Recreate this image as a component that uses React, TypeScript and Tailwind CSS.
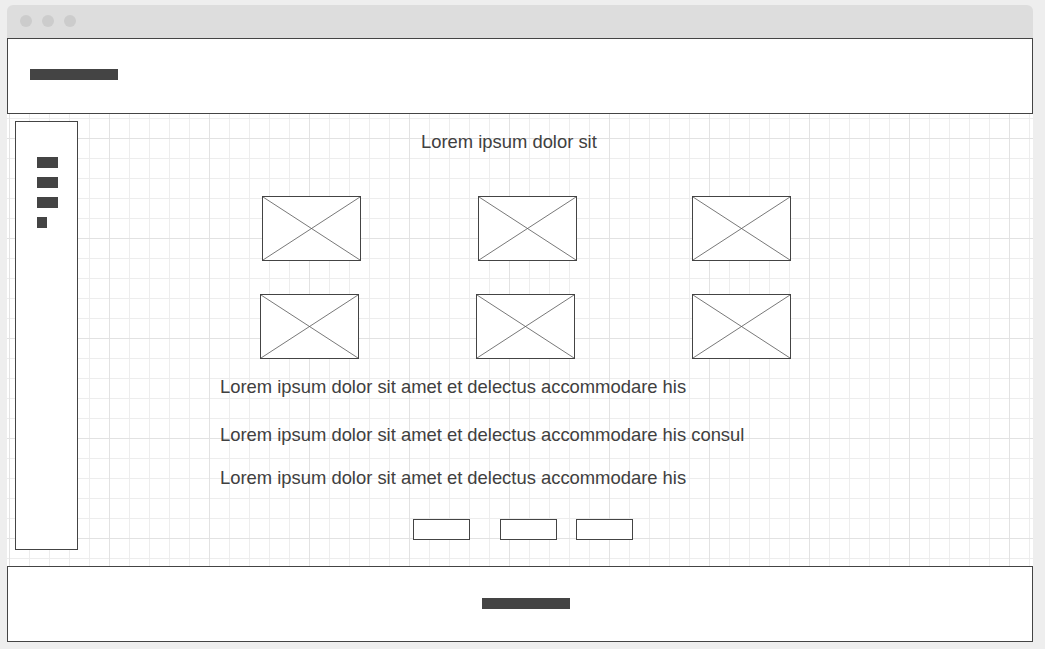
import React from 'react';

const font = { fontFamily: '"Liberation Sans", Arial, sans-serif' };

const Placeholder = () => (
  <div className="w-[99px] h-[65px] border border-[#444] bg-white shrink-0">
    <svg viewBox="0 0 97 63" preserveAspectRatio="none" className="w-full h-full block">
      <line x1="0" y1="0" x2="97" y2="63" stroke="#555" strokeWidth="0.8" />
      <line x1="97" y1="0" x2="0" y2="63" stroke="#555" strokeWidth="0.8" />
    </svg>
  </div>
);

const Button = () => <div className="w-[57px] h-[21px] border border-[#444] bg-white shrink-0" />;

export default function App() {
  return (
    <div className="w-[1045px] h-[649px] bg-[#eeeeee] pt-[5px] pl-[7px] overflow-hidden" style={font}>
      <div className="w-[1026px] flex flex-col">
        {/* Title bar */}
        <div className="h-[33px] bg-[#dddddd] rounded-t-[6px] flex items-start gap-[10px] pl-[13px] pt-[10px]">
          <div className="w-[12px] h-[12px] rounded-full bg-[#cccccc]" />
          <div className="w-[12px] h-[12px] rounded-full bg-[#cccccc]" />
          <div className="w-[12px] h-[12px] rounded-full bg-[#cccccc]" />
        </div>

        {/* Header */}
        <div className="h-[76px] border border-[#444] bg-white pl-[22px] pt-[30px]">
          <div className="w-[88px] h-[11px] bg-[#444]" />
        </div>

        {/* Body with grid */}
        <div className="h-[452px] flex bg-white [background-image:linear-gradient(to_right,#e2e2e2_1px,transparent_1px),linear-gradient(to_bottom,#e2e2e2_1px,transparent_1px),linear-gradient(to_right,#ededed_1px,transparent_1px),linear-gradient(to_bottom,#ededed_1px,transparent_1px)] [background-size:100px_100px,100px_100px,20px_20px,20px_20px] [background-position:2px_24px,2px_24px,2px_4px,2px_4px]">
          {/* Sidebar */}
          <div className="ml-[8px] mt-[7px] w-[63px] h-[429px] border border-[#444] bg-white shrink-0 pl-[21px] pt-[35px] flex flex-col gap-[9px]">
            <div className="w-[21px] h-[11px] bg-[#444]" />
            <div className="w-[21px] h-[11px] bg-[#444]" />
            <div className="w-[21px] h-[11px] bg-[#444]" />
            <div className="w-[10px] h-[11px] bg-[#444]" />
          </div>

          {/* Main */}
          <div className="flex-1 flex flex-col pt-[18px] text-[#404040] text-[18.4px] leading-[20px]">
            <p className="ml-[343px] whitespace-nowrap">Lorem ipsum dolor sit</p>

            <div className="flex mt-[44px] ml-[184px]">
              <Placeholder />
              <div className="w-[117px]" />
              <Placeholder />
              <div className="w-[115px]" />
              <Placeholder />
            </div>

            <div className="flex mt-[33px] ml-[182px] gap-[117px]">
              <Placeholder />
              <Placeholder />
              <Placeholder />
            </div>

            <p className="mt-[18px] ml-[142px] whitespace-nowrap">Lorem ipsum dolor sit amet et delectus accommodare his</p>
            <p className="mt-[28px] ml-[142px] whitespace-nowrap">Lorem ipsum dolor sit amet et delectus accommodare his consul</p>
            <p className="mt-[23px] ml-[142px] whitespace-nowrap">Lorem ipsum dolor sit amet et delectus accommodare his</p>

            <div className="flex mt-[31px] ml-[335px]">
              <Button />
              <div className="w-[30px]" />
              <Button />
              <div className="w-[19px]" />
              <Button />
            </div>
          </div>
        </div>

        {/* Footer */}
        <div className="h-[76px] border border-[#444] bg-white pl-[474px] pt-[31px]">
          <div className="w-[88px] h-[11px] bg-[#444]" />
        </div>
      </div>
    </div>
  );
}
